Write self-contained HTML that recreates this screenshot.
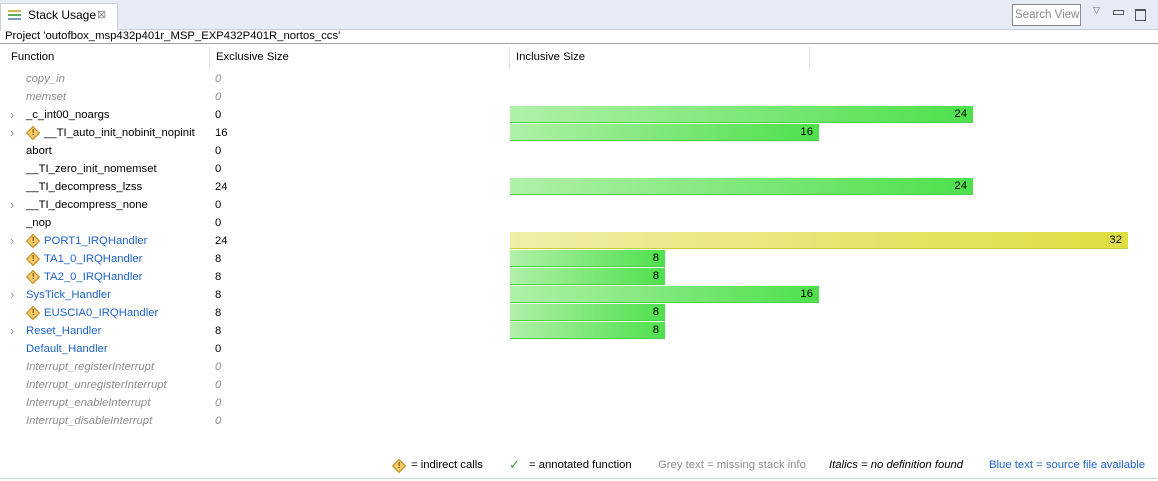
<!DOCTYPE html><html><head><style>
body{margin:0;width:1158px;height:481px;background:#fff;font-family:"Liberation Sans",sans-serif;font-size:11.3px;color:#000;position:relative;overflow:hidden}
.a{position:absolute;white-space:nowrap}
.r{position:absolute;height:18px;line-height:18px;white-space:nowrap}
.g{color:#8c8c8c;font-style:italic}
.b{color:#1e63c8}
.bar{position:absolute;left:510px;height:17px;border-bottom:1px solid #4ccf4c;background:linear-gradient(90deg,#b0f0a8,#4ee04c);text-align:right;line-height:17px;box-sizing:border-box;padding-right:6px}
.y{background:linear-gradient(90deg,#f0eea8,#dede40);border-bottom-color:#cccc40}
.w{display:inline-block;width:10px;height:10px;transform:rotate(45deg);background:#f5c86a;border:1px solid #c08a20;box-sizing:border-box;position:absolute;font-size:8px;line-height:8px;text-align:center;font-weight:bold}
.w span{display:inline-block;transform:rotate(-45deg);color:#7a4a00}
.c{position:absolute;color:#999;font-size:13px;line-height:14px}
</style></head><body>
<div class="a" style="left:0;top:0;width:1158px;height:29px;background:#e6ebf5;border-bottom:1px solid #c8cfdc"></div>
<div class="a" style="left:0;top:3px;width:116px;height:27px;background:#fff;border:1px solid #c8cfdc;border-bottom:none"></div>
<div class="a" style="left:8px;top:10px;width:13px;height:2px;background:#d6b54a"></div>
<div class="a" style="left:8px;top:14px;width:13px;height:2px;background:#5fa85f"></div>
<div class="a" style="left:8px;top:18px;width:13px;height:2px;background:#7a9ad0"></div>
<div class="a" style="left:28px;top:8px;font-size:12px">Stack Usage</div>
<div class="a" style="left:97px;top:8px;color:#888;font-size:11px">⊠</div>
<div class="a" style="left:1012px;top:4px;width:69px;height:22px;border:1px solid #888;background:#fff;color:#888;line-height:20px;padding-left:2px;box-sizing:border-box;font-size:11.5px">Search View</div>
<div class="a" style="left:1093px;top:5px;color:#666;font-size:9px">▽</div>
<div class="a" style="left:1113px;top:10px;width:9px;height:3px;border:1px solid #555"></div>
<div class="a" style="left:1135px;top:9px;width:9px;height:9px;border:1px solid #555;border-top-width:2px"></div>
<div class="a" style="left:0;top:30px;width:1158px;height:13px;border-bottom:1px solid #a0a0a0"></div>
<div class="a" style="left:5px;top:30px">Project 'outofbox_msp432p401r_MSP_EXP432P401R_nortos_ccs'</div>
<div class="a" style="left:0;top:478px;width:1158px;height:1px;background:#c8cfdc"></div>
<div class="a" style="left:209px;top:47px;width:1px;height:21px;background:#e5e5e5"></div>
<div class="a" style="left:509px;top:47px;width:1px;height:21px;background:#e5e5e5"></div>
<div class="a" style="left:809px;top:47px;width:1px;height:21px;background:#e5e5e5"></div>
<div class="a" style="left:11px;top:51px">Function</div>
<div class="a" style="left:216px;top:51px">Exclusive Size</div>
<div class="a" style="left:516px;top:51px">Inclusive Size</div>

<div class="r g" style="top:70px;left:26px">copy_in</div><div class="r g" style="top:70px;left:215px">0</div>
<div class="r g" style="top:88px;left:26px">memset</div><div class="r g" style="top:88px;left:215px">0</div>
<div class="r" style="top:106px;left:26px">_c_int00_noargs</div><div class="r" style="top:106px;left:215px">0</div><div class="c" style="top:108px;left:10px">›</div>
<div class="bar" style="top:106px;width:463px">24</div>
<div class="r" style="top:124px;left:44px">__TI_auto_init_nobinit_nopinit</div><div class="r" style="top:124px;left:215px">16</div><div class="c" style="top:126px;left:10px">›</div><div class="w" style="top:128px;left:28px"><span>!</span></div>
<div class="bar" style="top:124px;width:309px">16</div>
<div class="r" style="top:142px;left:26px">abort</div><div class="r" style="top:142px;left:215px">0</div>
<div class="r" style="top:160px;left:26px">__TI_zero_init_nomemset</div><div class="r" style="top:160px;left:215px">0</div>
<div class="r" style="top:178px;left:26px">__TI_decompress_lzss</div><div class="r" style="top:178px;left:215px">24</div>
<div class="bar" style="top:178px;width:463px">24</div>
<div class="r" style="top:196px;left:26px">__TI_decompress_none</div><div class="r" style="top:196px;left:215px">0</div><div class="c" style="top:198px;left:10px">›</div>
<div class="r" style="top:214px;left:26px">_nop</div><div class="r" style="top:214px;left:215px">0</div>
<div class="r b" style="top:232px;left:44px">PORT1_IRQHandler</div><div class="r" style="top:232px;left:215px">24</div><div class="c" style="top:234px;left:10px">›</div><div class="w" style="top:236px;left:28px"><span>!</span></div>
<div class="bar y" style="top:232px;width:618px">32</div>
<div class="r b" style="top:250px;left:44px">TA1_0_IRQHandler</div><div class="r" style="top:250px;left:215px">8</div><div class="w" style="top:254px;left:28px"><span>!</span></div>
<div class="bar" style="top:250px;width:155px">8</div>
<div class="r b" style="top:268px;left:44px">TA2_0_IRQHandler</div><div class="r" style="top:268px;left:215px">8</div><div class="w" style="top:272px;left:28px"><span>!</span></div>
<div class="bar" style="top:268px;width:155px">8</div>
<div class="r b" style="top:286px;left:26px">SysTick_Handler</div><div class="r" style="top:286px;left:215px">8</div><div class="c" style="top:288px;left:10px">›</div>
<div class="bar" style="top:286px;width:309px">16</div>
<div class="r b" style="top:304px;left:44px">EUSCIA0_IRQHandler</div><div class="r" style="top:304px;left:215px">8</div><div class="w" style="top:308px;left:28px"><span>!</span></div>
<div class="bar" style="top:304px;width:155px">8</div>
<div class="r b" style="top:322px;left:26px">Reset_Handler</div><div class="r" style="top:322px;left:215px">8</div><div class="c" style="top:324px;left:10px">›</div>
<div class="bar" style="top:322px;width:155px">8</div>
<div class="r b" style="top:340px;left:26px">Default_Handler</div><div class="r" style="top:340px;left:215px">0</div>
<div class="r g" style="top:358px;left:26px">Interrupt_registerInterrupt</div><div class="r g" style="top:358px;left:215px">0</div>
<div class="r g" style="top:376px;left:26px">Interrupt_unregisterInterrupt</div><div class="r g" style="top:376px;left:215px">0</div>
<div class="r g" style="top:394px;left:26px">Interrupt_enableInterrupt</div><div class="r g" style="top:394px;left:215px">0</div>
<div class="r g" style="top:412px;left:26px">Interrupt_disableInterrupt</div><div class="r g" style="top:412px;left:215px">0</div>

<div class="w" style="top:461px;left:394px"><span>!</span></div>
<div class="a" style="top:459px;left:411px">= indirect calls</div>
<div class="a" style="top:457px;left:509px;color:#3a9a3a;font-size:13px">✓</div>
<div class="a" style="top:459px;left:529px">= annotated function</div>
<div class="a" style="top:459px;left:658px;color:#8c8c8c">Grey text = missing stack info</div>
<div class="a" style="top:459px;left:829px;font-style:italic">Italics = no definition found</div>
<div class="a" style="top:459px;left:989px;color:#1e63c8">Blue text = source file available</div>
</body></html>
